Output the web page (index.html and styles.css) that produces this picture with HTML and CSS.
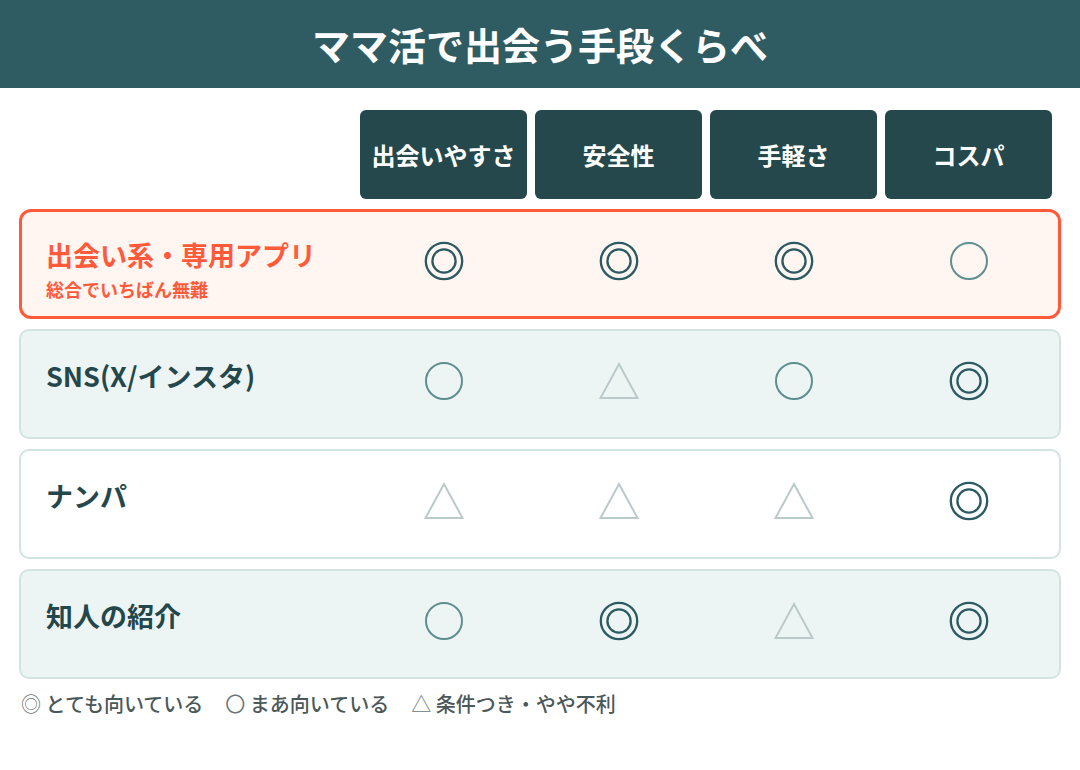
FILE: index.html
```html
<!DOCTYPE html>
<html lang="ja">
<head>
<meta charset="UTF-8">
<meta name="viewport" content="width=device-width, initial-scale=1.0">
<title>ママ活で出会う手段くらべ</title>
<link rel="stylesheet" href="styles.css">
</head>
<body>

  <header class="page-head">
    <h1>ママ活で出会う手段くらべ</h1>
  </header>

  <main class="compare">
    <!-- 項目の見出し -->
    <div class="head-row">
      <div class="head-spacer"></div>
      <div class="head-cell">出会いやすさ</div>
      <div class="head-cell">安全性</div>
      <div class="head-cell">手軽さ</div>
      <div class="head-cell">コスパ</div>
    </div>

    <div class="row row-pick">
      <div class="label">
        <div class="label-main">出会い系・専用アプリ</div>
        <div class="label-sub">総合でいちばん無難</div>
      </div>
      <div class="mark"><svg class="dbl" viewBox="0 0 40 40"><circle cx="20" cy="20" r="18.2"/><circle cx="20" cy="20" r="11.6"/></svg></div>
      <div class="mark"><svg class="dbl" viewBox="0 0 40 40"><circle cx="20" cy="20" r="18.2"/><circle cx="20" cy="20" r="11.6"/></svg></div>
      <div class="mark"><svg class="dbl" viewBox="0 0 40 40"><circle cx="20" cy="20" r="18.2"/><circle cx="20" cy="20" r="11.6"/></svg></div>
      <div class="mark"><svg class="one" viewBox="0 0 40 40"><circle cx="20" cy="20" r="18"/></svg></div>
    </div>

    <div class="row row-tint">
      <div class="label">
        <div class="label-main">SNS(X/インスタ)</div>
      </div>
      <div class="mark"><svg class="one" viewBox="0 0 40 40"><circle cx="20" cy="20" r="18"/></svg></div>
      <div class="mark"><svg class="tri" viewBox="0 0 40 40"><polygon points="20,3 38.5,37 1.5,37"/></svg></div>
      <div class="mark"><svg class="one" viewBox="0 0 40 40"><circle cx="20" cy="20" r="18"/></svg></div>
      <div class="mark"><svg class="dbl" viewBox="0 0 40 40"><circle cx="20" cy="20" r="18.2"/><circle cx="20" cy="20" r="11.6"/></svg></div>
    </div>

    <div class="row">
      <div class="label">
        <div class="label-main">ナンパ</div>
      </div>
      <div class="mark"><svg class="tri" viewBox="0 0 40 40"><polygon points="20,3 38.5,37 1.5,37"/></svg></div>
      <div class="mark"><svg class="tri" viewBox="0 0 40 40"><polygon points="20,3 38.5,37 1.5,37"/></svg></div>
      <div class="mark"><svg class="tri" viewBox="0 0 40 40"><polygon points="20,3 38.5,37 1.5,37"/></svg></div>
      <div class="mark"><svg class="dbl" viewBox="0 0 40 40"><circle cx="20" cy="20" r="18.2"/><circle cx="20" cy="20" r="11.6"/></svg></div>
    </div>

    <div class="row row-tint">
      <div class="label">
        <div class="label-main">知人の紹介</div>
      </div>
      <div class="mark"><svg class="one" viewBox="0 0 40 40"><circle cx="20" cy="20" r="18"/></svg></div>
      <div class="mark"><svg class="dbl" viewBox="0 0 40 40"><circle cx="20" cy="20" r="18.2"/><circle cx="20" cy="20" r="11.6"/></svg></div>
      <div class="mark"><svg class="tri" viewBox="0 0 40 40"><polygon points="20,3 38.5,37 1.5,37"/></svg></div>
      <div class="mark"><svg class="dbl" viewBox="0 0 40 40"><circle cx="20" cy="20" r="18.2"/><circle cx="20" cy="20" r="11.6"/></svg></div>
    </div>

    <!-- 凡例 -->
    <p class="legend">
      <span class="legend-item"><span class="legend-sym">◎</span> とても向いている</span>
      <span class="legend-item"><span class="legend-sym">〇</span> まあ向いている</span>
      <span class="legend-item"><span class="legend-sym">△</span> 条件つき・やや不利</span>
    </p>
  </main>

</body>
</html>
```

FILE: styles.css
```css
body {
  margin: 0;
  background: #fff;
  font-family: "Noto Sans CJK JP", "Noto Sans", sans-serif;
  color: #24474b;
}

.page-head {
  height: 88px;
  background: #2f5c63;
  display: flex;
  justify-content: center;
  align-items: center;
}

.page-head h1 {
  margin: 0;
  color: #fff;
  font-size: 38px;
  font-weight: 700;
  line-height: 1;
}

.compare {
  padding: 22px 19px 0;
}

.head-row {
  display: grid;
  grid-template-columns: 1fr repeat(4, 167px);
  column-gap: 8px;
  padding-right: 9px;
  margin-bottom: 10px;
}

.head-cell {
  height: 89px;
  background: #24484c;
  color: #fff;
  border-radius: 6px;
  display: flex;
  justify-content: center;
  align-items: center;
  font-size: 24px;
  font-weight: 700;
}

.row {
  box-sizing: border-box;
  height: 110px;
  display: grid;
  grid-template-columns: 1fr repeat(4, 167px);
  column-gap: 8px;
  align-items: start;
  padding: 27px 7px 0 25px;
  margin-bottom: 10px;
  background: #fff;
  border: 2px solid #d3e2e2;
  border-radius: 10px;
}

.row .mark {
  margin-top: 1px;
}

.row-tint {
  background: #edf5f4;
}

.row-pick {
  background: #fff5f1;
  border: 3px solid #ff5b3b;
  border-radius: 12px;
  padding: 25px 6px 0 24px;
}

.row-pick .mark {
  margin-top: 2px;
}

.label-main {
  font-size: 27px;
  font-weight: 700;
  line-height: 36px;
}

.label-sub {
  margin-top: 4px;
  font-size: 18px;
  font-weight: 700;
  line-height: 24px;
}

.row-pick .label-main,
.row-pick .label-sub {
  color: #ff5b3b;
}

.mark {
  height: 44px;
  display: flex;
  justify-content: center;
  align-items: center;
}

.mark svg {
  width: 40px;
  height: 40px;
  fill: none;
}

.dbl {
  stroke: #2b5a61;
  stroke-width: 2.3;
}

.one {
  stroke: #5e8e8e;
  stroke-width: 2;
}

.tri {
  stroke: #bac9c9;
  stroke-width: 2;
}

.legend {
  margin: 8px 0 0 2px;
  font-size: 20px;
  font-weight: 500;
  color: #4a5859;
  display: flex;
  gap: 22px;
}

.legend-sym {
  color: #6a7676;
  font-weight: 400;
}
```
